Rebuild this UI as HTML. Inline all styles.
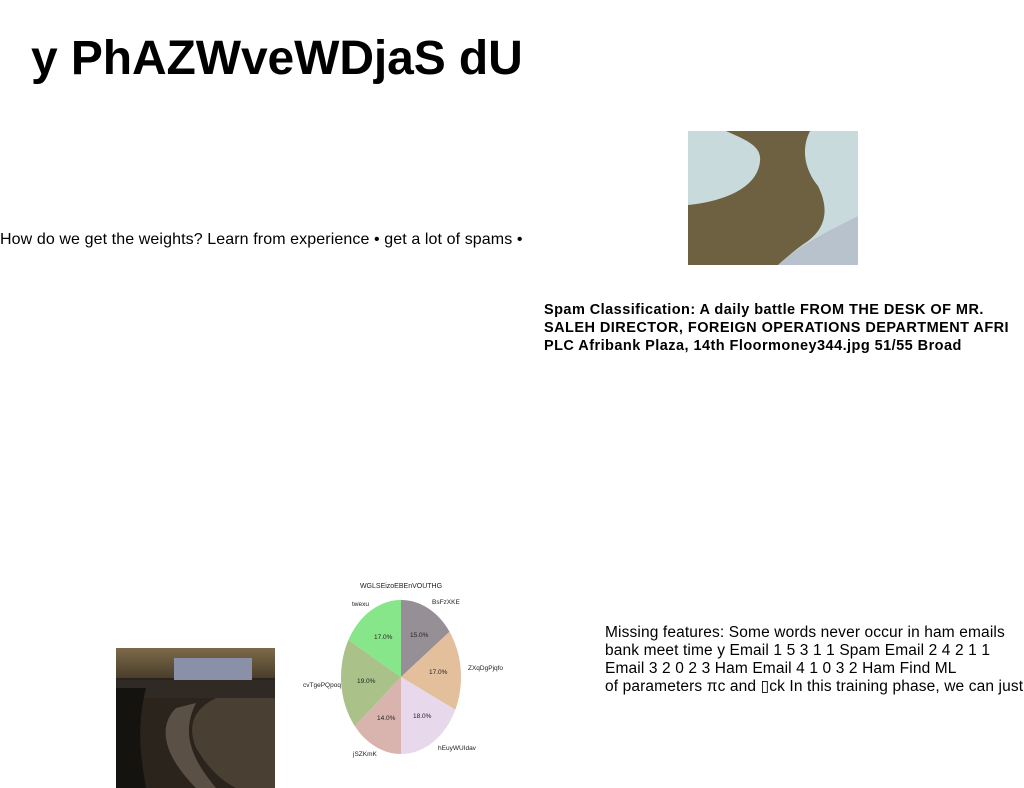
<!DOCTYPE html>
<html><head><meta charset="utf-8"><style>
body{margin:0;width:1024px;height:788px;background:#fff;position:relative;overflow:hidden;font-family:"Liberation Sans",sans-serif;color:#000}
.a{position:absolute;white-space:nowrap}
h1{position:absolute;left:31px;top:31px;margin:0;font-size:48px;font-weight:900;letter-spacing:-0.1px}
.t{font-size:16px;letter-spacing:0.1px}
.b{font-size:14.5px;font-weight:bold;line-height:18px;letter-spacing:0.45px}
.r{font-size:15.5px;line-height:18px;letter-spacing:0.13px}
</style></head><body>
<h1>y PhAZWveWDjaS dU</h1>
<div class="a t" style="left:0;top:231px">How do we get the weights? Learn from experience • get a lot of spams •</div>
<svg class="a" style="left:688px;top:131px" width="170" height="134" viewBox="0 0 170 134">
<rect width="170" height="134" fill="#c9dadd"/>
<path d="M38 0 L122 0 C112 20 118 40 130 55 C140 75 140 95 120 110 C105 120 95 130 90 134 L0 134 L0 74 C40 70 70 55 72 30 C74 14 55 8 38 0 Z" fill="#6e6142"/>
<path d="M90 134 C110 115 140 100 170 85 L170 134 Z" fill="#b8c2cc"/>
</svg>
<div class="a b" style="left:544px;top:301px">Spam Classification: A daily battle FROM THE DESK OF MR.<br>SALEH DIRECTOR, FOREIGN OPERATIONS DEPARTMENT AFRI<br>PLC Afribank Plaza, 14th Floormoney344.jpg 51/55 Broad</div>
<svg class="a" style="left:116px;top:648px" width="159" height="140" viewBox="0 0 159 140">
<defs><linearGradient id="s" x1="0" y1="0" x2="0" y2="1"><stop offset="0" stop-color="#7d6a48"/><stop offset="1" stop-color="#4a3e2c"/></linearGradient></defs>
<rect width="159" height="140" fill="#2a241d"/>
<rect width="159" height="30" fill="url(#s)"/>
<rect x="58" y="10" width="78" height="25" fill="#8a90a8"/>
<rect x="0" y="32" width="159" height="18" fill="#2f2a24"/>
<path d="M100 50 C80 60 70 75 80 100 C95 125 110 135 120 140 L159 140 L159 50 Z" fill="#4a3f33"/>
<path d="M60 60 C40 80 50 110 80 140 L100 140 C75 110 65 85 80 55 Z" fill="#5a5045"/>
<path d="M0 40 L30 40 C20 80 25 110 30 140 L0 140 Z" fill="#15130f"/>
</svg>
<svg class="a" style="left:300px;top:575px" width="210" height="195" viewBox="300 575 210 195" font-family="Liberation Sans,sans-serif" font-size="6.5" fill="#222">
<g transform="translate(401,677) scale(60,77)">
<path d="M0 0 L0 -1 A1 1 0 0 1 0.809 -0.588 Z" fill="#978f96"/>
<path d="M0 0 L0.809 -0.588 A1 1 0 0 1 0.905 0.426 Z" fill="#e3bf9b"/>
<path d="M0 0 L0.905 0.426 A1 1 0 0 1 0 1 Z" fill="#e8d8ec"/>
<path d="M0 0 L0 1 A1 1 0 0 1 -0.770 0.638 Z" fill="#d9b3ae"/>
<path d="M0 0 L-0.770 0.638 A1 1 0 0 1 -0.876 -0.482 Z" fill="#aac28a"/>
<path d="M0 0 L-0.876 -0.482 A1 1 0 0 1 0 -1 Z" fill="#88e68a"/>
</g>
<text x="401" y="588" text-anchor="middle" font-size="7">WGLSEizoEBEnVOUTHG</text>
<text x="352" y="606">twexu</text><text x="432" y="604">BsFzXKE</text>
<text x="468" y="670">ZXqDgPjqfo</text><text x="303" y="687">cvTgePQpoq</text>
<text x="353" y="756">jSZKmK</text><text x="438" y="750">hEuyWUIdav</text>
<text x="374" y="639">17.0%</text><text x="410" y="637">15.0%</text>
<text x="429" y="674">17.0%</text><text x="357" y="683">19.0%</text>
<text x="377" y="720">14.0%</text><text x="413" y="718">18.0%</text>
</svg>
<div class="a r" style="left:605px;top:624px">Missing features: Some words never occur in ham emails<br>bank meet time y Email 1 5 3 1 1 Spam Email 2 4 2 1 1<br>Email 3 2 0 2 3 Ham Email 4 1 0 3 2 Ham Find ML<br>of parameters πc and ▯ck In this training phase, we can just</div>
</body></html>
